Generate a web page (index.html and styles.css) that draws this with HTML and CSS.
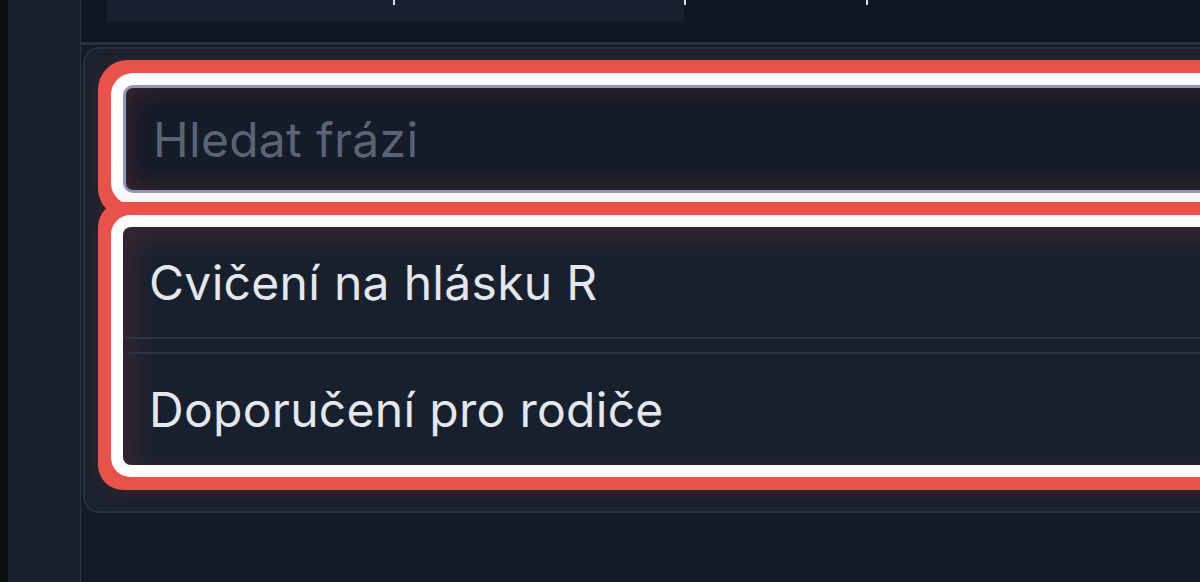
FILE: index.html
```html
<!DOCTYPE html>
<html lang="cs">
<head>
  <meta charset="UTF-8" />
  <meta name="viewport" content="width=device-width, initial-scale=1.0"/>
  <title>Fráze</title>
  <link rel="stylesheet" href="styles.css">
</head>
<body>

  <div class="edge"></div>
  <aside class="sidebar"></aside>

  <main class="main">
    <div class="topbar">
      <div class="tab"><span class="tick tick-a"></span></div>
      <span class="tick tick-b"></span>
      <span class="tick tick-c"></span>
    </div>

    <div class="card">
      <input class="search" type="text" placeholder="Hledat frázi" />

      <div class="list">
        <div class="row first">Cvičení na hlásku R</div>
        <div class="row second">Doporučení pro rodiče</div>
      </div>
    </div>
  </main>

</body>
</html>
```

FILE: styles.css
```css
html, body {
  margin: 0;
  height: 100%;
  overflow: hidden;
}
body {
  display: flex;
  background: #141b27;
  font-family: Inter, "Noto Sans", sans-serif;
  color: #e4e7ee;
}
.edge {
  width: 8px;
  background: #0b0e13;
}
.sidebar {
  width: 72px;
  background: #18212d;
  border-right: 1px solid #2b3541;
}
.main {
  flex: 1;
  min-width: 0;
  overflow: hidden;
}
.topbar {
  height: 42px;
  background: #111722;
  border-bottom: 3px solid #29313d;
  display: flex;
  align-items: flex-start;
}
.tab {
  width: 577px;
  height: 21px;
  margin-left: 26px;
  background: #192030;
  display: flex;
}
.tick {
  display: block;
  width: 2px;
  height: 5px;
  background: #d8dce4;
}
.tick-a { margin-left: 286px; }
.tick-b { margin-left: 0; }
.tick-c { margin-left: 180px; }

/* card runs off the right edge, children are clipped there */
.card {
  margin: 2px 0 0 2px;
  border: 2px solid #28313e;
  border-right: none;
  border-radius: 16px 0 0 16px;
  background: #1b212d;
  padding: 36px 0 46px 38px;
  overflow: hidden;
}
.search {
  display: block;
  box-sizing: border-box;
  width: calc(100% + 60px);
  height: 108px;
  margin: 0;
  padding: 0 27px;
  border: 3px solid #8f97bf;
  border-radius: 10px;
  background: #151b28;
  font-family: inherit;
  font-size: 48px;
  letter-spacing: 0.3px;
  color: #e4e7ee;
  outline: none;
  box-shadow: inset 0 0 26px rgba(232, 82, 74, 0.22),
              0 0 0 12px #fdfdfd,
              0 0 0 25px #e8524a,
              0 0 18px 25px rgba(232, 82, 74, 0.12);
}
.search::placeholder {
  color: #5a6374;
}
.list {
  position: relative;
  width: calc(100% + 60px);
  margin-top: 34px;
  background: #18202d;
  border-radius: 8px;
  box-shadow: inset 10px 10px 30px rgba(232, 82, 74, 0.16),
              0 0 0 12px #fdfdfd,
              0 0 0 25px #e8524a,
              0 0 18px 25px rgba(232, 82, 74, 0.12);
}
.row {
  height: 110px;
  display: flex;
  align-items: center;
  padding-left: 26px;
  font-size: 48px;
  letter-spacing: 0.3px;
}
.row.first {
  border-bottom: 2px solid #2c3541;
  border-radius: 8px;
}
.row.second {
  margin-top: 13px;
  height: 111px;
  border-top: 2px solid #2c3541;
  border-radius: 8px;
}
```
